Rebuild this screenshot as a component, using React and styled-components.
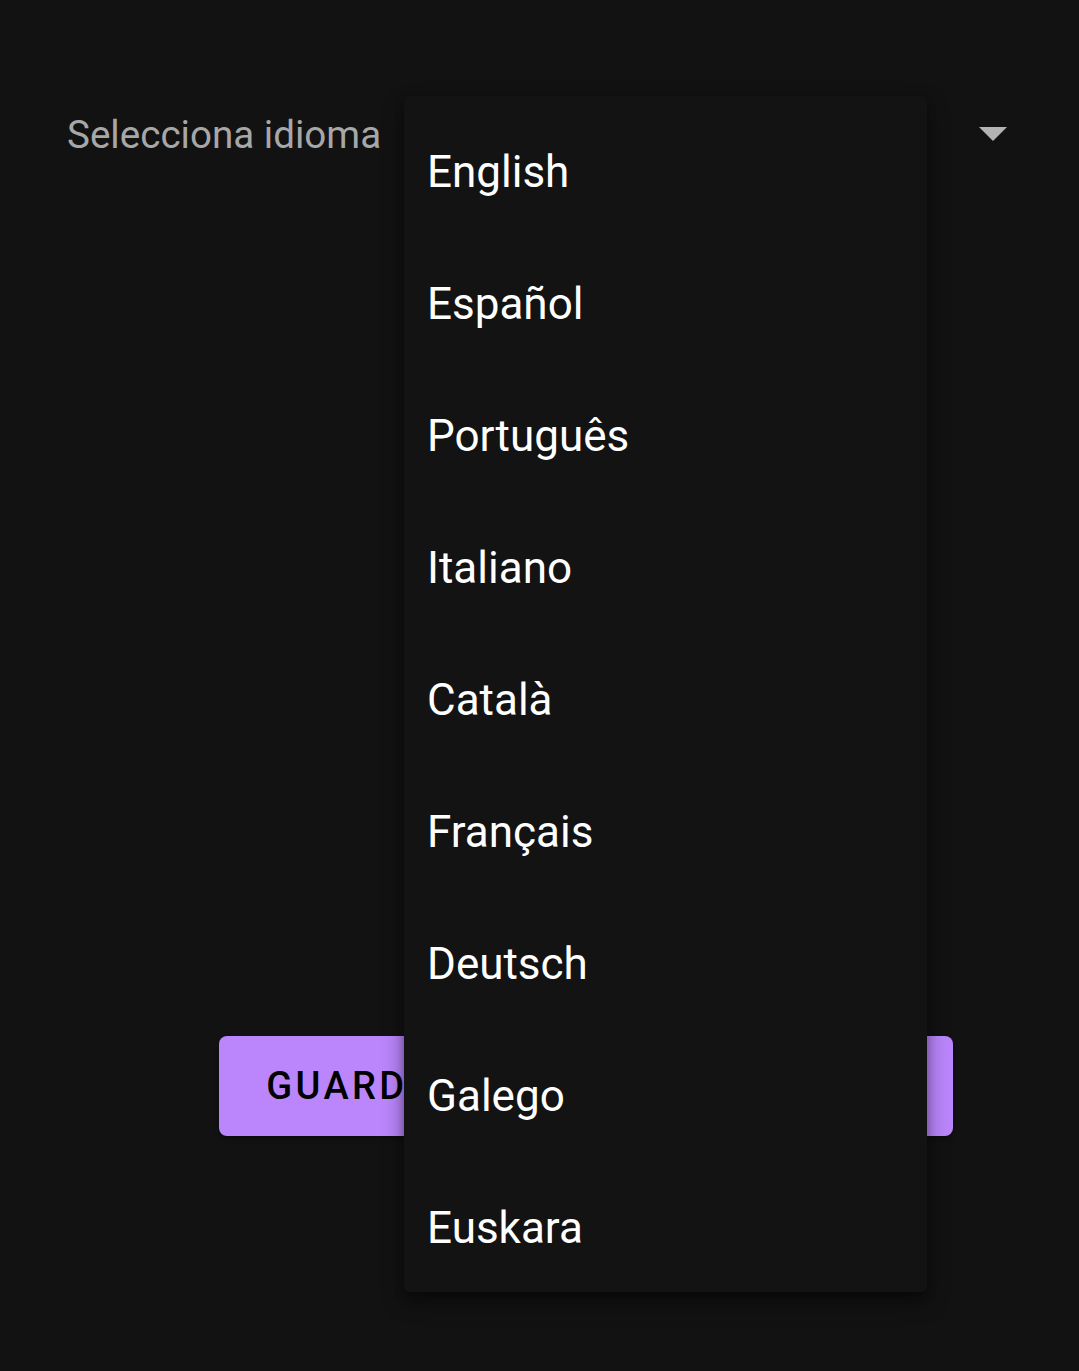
import React from "react";
import styled, { createGlobalStyle } from "styled-components";

const Global = createGlobalStyle`
  html, body { margin: 0; padding: 0; background: #121212; }
  body { font-family: Roboto, "Noto Sans", sans-serif; }
  #root { min-height: 1371px; }
`;

const Screen = styled.div`
  position: relative;
  width: 1079px;
  height: 1371px;
  background: #121212;
  overflow: hidden;
`;

const Content = styled.div`
  display: flex;
  flex-direction: column;
  padding: 108px 72px 0 67px;
`;

const SpinnerRow = styled.div`
  display: flex;
  align-items: center;
  justify-content: space-between;
  height: 52px;
`;

const Label = styled.span`
  font-size: 38.6px;
  color: #a7a7a7;
`;

const Arrow = styled.svg`
  width: 28px;
  height: 15px;
`;

const ButtonWrap = styled.div`
  display: flex;
  justify-content: flex-start;
  margin-top: 876px;
  padding-left: 152px;
`;

const SaveButton = styled.button`
  width: 734px;
  height: 100px;
  border: none;
  border-radius: 8px;
  padding: 0 22px 0 0;
  background: #bb86fc;
  color: #000;
  font-family: Roboto, sans-serif;
  font-weight: 500;
  font-size: 38px;
  letter-spacing: 3.4px;
  white-space: nowrap;
  display: flex;
  align-items: center;
  justify-content: center;
  box-shadow: 0 3px 4px rgba(0, 0, 0, 0.35);
`;

const Menu = styled.ul`
  position: absolute;
  left: 404px;
  top: 96px;
  width: 523px;
  margin: 0;
  padding: 10px 0 0;
  height: 1196px;
  box-sizing: border-box;
  list-style: none;
  background: #131313;
  border-radius: 6px;
  box-shadow: 0 10px 22px rgba(0, 0, 0, 0.4), 0 4px 8px rgba(0, 0, 0, 0.25);
`;

const Item = styled.li`
  height: 132px;
  display: flex;
  align-items: center;
  padding-left: 23px;
  font-size: 44px;
  color: #ffffff;
`;

const languages = [
  "English",
  "Español",
  "Português",
  "Italiano",
  "Català",
  "Français",
  "Deutsch",
  "Galego",
  "Euskara",
];

export default function App() {
  return (
    <Screen>
      <Global />
      <Content>
        <SpinnerRow>
          <Label>Selecciona idioma</Label>
          <Arrow viewBox="0 0 28 15">
            <path d="M0 0 H28 L14 14 Z" fill="#b3b3b3" />
          </Arrow>
        </SpinnerRow>
        <ButtonWrap>
          <SaveButton>GUARDAR LA CONFIGURACIÓN</SaveButton>
        </ButtonWrap>
      </Content>
      <Menu>
        {languages.map((l) => (
          <Item key={l}>{l}</Item>
        ))}
      </Menu>
    </Screen>
  );
}
